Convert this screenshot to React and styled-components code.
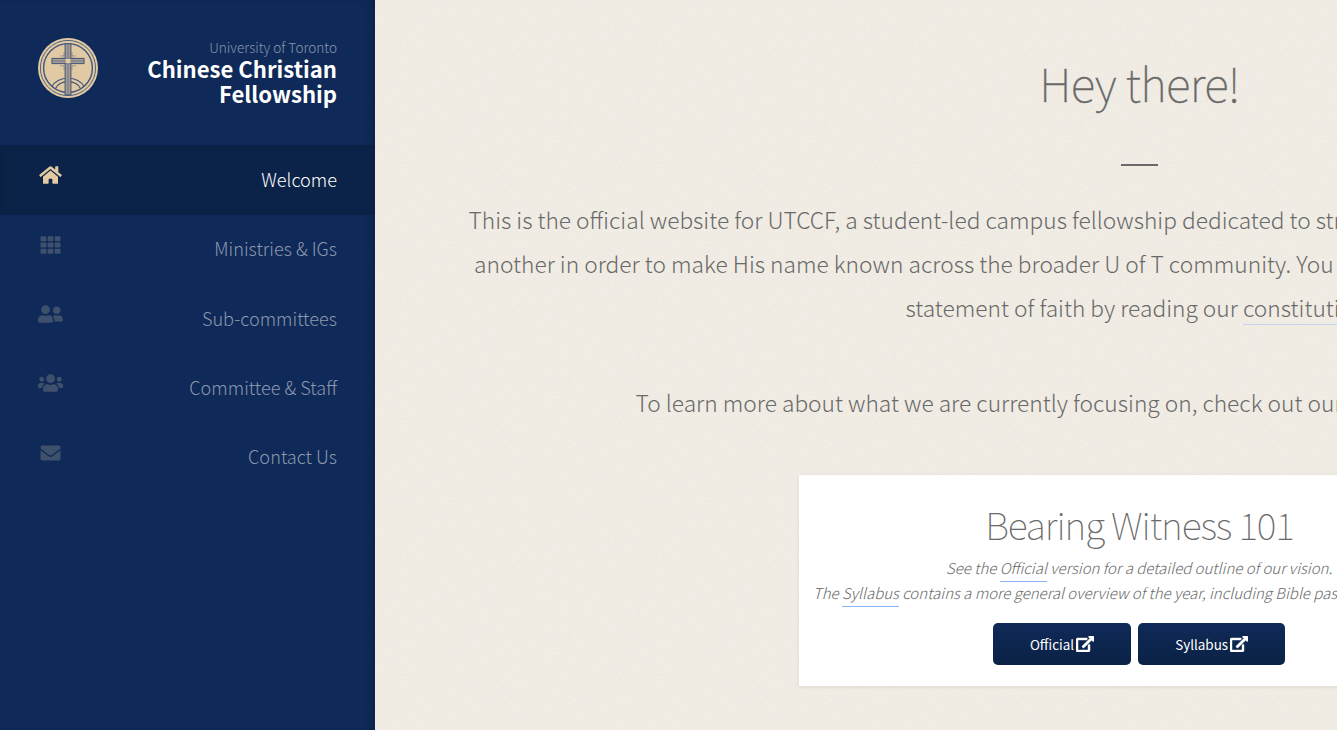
import React from 'react';
import styled, { createGlobalStyle, css } from 'styled-components';
import { FaHome, FaTh, FaUserFriends, FaUsers, FaEnvelope } from 'react-icons/fa';

const grain = `url("data:image/svg+xml,%3Csvg xmlns='http://www.w3.org/2000/svg' width='256' height='256'%3E%3Cfilter id='n'%3E%3CfeTurbulence type='fractalNoise' baseFrequency='0.55' numOctaves='3' stitchTiles='stitch'/%3E%3CfeColorMatrix values='0 0 0 0 0.45 0 0 0 0 0.43 0 0 0 0 0.38 0.17 0 0 0 -0.05'/%3E%3C/filter%3E%3Crect width='256' height='256' filter='url(%23n)'/%3E%3C/svg%3E")`;

const GlobalStyle = createGlobalStyle`
  *, *::before, *::after { box-sizing: border-box; }
  html, body { margin: 0; padding: 0; overflow: hidden; }
  body {
    font-family: "Noto Sans CJK SC", "Open Sans", sans-serif;
    font-weight: 200;
    color: #696969;
    background: #efebe3;
  }
  h1, h2, h3, p { margin: 0; }
  a { color: inherit; text-decoration: none; }
`;

const Page = styled.div`
  display: flex;
  width: 1337px;
  height: 730px;
  overflow: hidden;
`;

const Sidebar = styled.aside`
  flex: none;
  width: 375px;
  height: 100%;
  background: #0f2a58;
  box-shadow: inset -7px 0 9px -5px rgba(0, 18, 50, 0.4);
`;

const Brand = styled.header`
  display: flex;
  justify-content: space-between;
  height: 145.3px;
  padding: 38px 38px 0;
`;

const Seal = styled.svg`
  flex: none;
  width: 60px;
  height: 60px;
`;

const BrandText = styled.div`
  text-align: right;
`;

const School = styled.p`
  font-size: 13.6px;
  font-weight: 300;
  line-height: 18px;
  color: #8797ae;
`;

const Name = styled.h1`
  font-size: 22.1px;
  font-weight: 700;
  line-height: 25px;
  color: #fff;
`;

const Nav = styled.nav`
  display: flex;
  flex-direction: column;
`;

const NavItem = styled.a`
  display: flex;
  align-items: center;
  justify-content: space-between;
  height: 69.3px;
  padding: 0 38px;
  font-size: 18.15px;
  font-weight: 300;
  line-height: 28px;
  color: #8c98ae;

  svg {
    width: 25px;
    height: 20px;
    margin-bottom: 9px;
    color: #3f506c;
  }

  ${(p) =>
    p.$active &&
    css`
      color: #fff;
      background: #0b2348;
      box-shadow: inset 0 0 9px rgba(0, 20, 45, 0.16);
      svg { color: #e3caa2; }
    `}
`;

const NavLabel = styled.span`
  padding-bottom: 2px;
`;

const Main = styled.main`
  flex: none;
  display: flex;
  flex-direction: column;
  align-items: center;
  width: 1529px;
  padding-top: 47px;
  background: ${grain} #f2eee6;
`;

const Title = styled.h2`
  font-size: 46px;
  font-weight: 100;
  line-height: 70px;
  letter-spacing: -0.6px;
  -webkit-text-stroke: 0.35px currentColor;
`;

const Rule = styled.hr`
  width: 37px;
  height: 2px;
  margin: 47px 0 32px;
  border: 0;
  background: #696969;
`;

const Lead = styled.p`
  display: flex;
  flex-direction: column;
  align-items: center;
  margin-bottom: ${(p) => p.$gap}px;
  font-size: 22.74px;
  line-height: 44px;
`;

const Line = styled.span`
  display: block;
  width: ${(p) => p.$width}px;
  white-space: nowrap;
`;

const Link = styled.a`
  border-bottom: 1px solid #c3d5ec;
`;

const NoteLink = styled(Link)`
  padding-bottom: 3px;
  border-bottom-color: #8ab4f8;
`;

const Card = styled.section`
  display: flex;
  flex-direction: column;
  align-items: center;
  width: 681px;
  height: 211px;
  padding-top: 23px;
  background: #fff;
  box-shadow: 0 1px 4px rgba(80, 70, 50, 0.12);
`;

const CardTitle = styled.h3`
  font-size: 37.5px;
  font-weight: 100;
  line-height: 52px;
  letter-spacing: -1.1px;
`;

const Note = styled.p`
  display: flex;
  flex-direction: column;
  align-items: center;
  margin: 5px 0 18px;
  font-size: 15px;
  font-style: italic;
  line-height: 25px;
`;

const Actions = styled.div`
  display: flex;
  gap: 7px;
  margin-right: 1px;
`;

const Button = styled.a`
  display: flex;
  align-items: center;
  gap: 2px;
  height: 42px;
  padding: 0 37px;
  border-radius: 5px;
  background: linear-gradient(#0f2a58, #0b2246);
  font-size: 13.45px;
  font-weight: 400;
  line-height: 20px;
  color: #fff;

  svg {
    width: 18px;
    height: 16px;
    fill: currentColor;
    stroke: currentColor;
    stroke-width: 14px;
  }
`;

const ExternalIcon = () => (
  <svg viewBox="0 0 576 512">
    <path d="M576 24v127.984c0 21.461-25.96 31.98-40.971 16.971l-35.707-35.709-243.523 243.523c-9.373 9.373-24.568 9.373-33.941 0l-22.627-22.627c-9.373-9.373-9.373-24.569 0-33.941L442.756 76.676l-35.703-35.705C391.982 25.9 402.656 0 424.024 0H552c13.255 0 24 10.745 24 24zM407.029 270.794l-16 16A23.999 23.999 0 0 0 384 303.765V448H64V128h264a24.003 24.003 0 0 0 16.970-7.029l16-16C376.089 89.851 365.381 64 344 64H48C21.490 64 0 85.490 0 112v352c0 26.510 21.490 48 48 48h352c26.510 0 48-21.490 48-48V287.763c0-21.382-25.852-32.090-40.971-16.969z" />
  </svg>
);

const Logo = () => (
  <Seal viewBox="0 0 60 60" fill="none" stroke="#43557a">
    <circle cx="30" cy="30" r="30" fill="#e0c9a3" stroke="none" />
    <circle cx="30" cy="30" r="27.6" strokeWidth="0.9" />
    <circle cx="30" cy="30" r="24.4" strokeWidth="1.4" />
    <path d="M14 48.500a17 12.500 0 0 1 32 0M17.500 50.500a13 9.500 0 0 1 25 0" strokeWidth="1.1" />
    <path d="M22 18h4v-4M24 20h3M38 18h-4v-4M36 20h-3M22 27.800h4v4M38 27.800h-4v4" strokeWidth="0.7" opacity="0.6" />
    <rect x="27.100" y="5.800" width="5.800" height="51" fill="#a39c90" strokeWidth="1" />
    <rect x="14" y="20.400" width="32" height="5.200" fill="#a39c90" strokeWidth="1" />
    <path d="M30 6v51M14 23h32" stroke="#66718a" strokeWidth="0.8" />
    <rect x="27.700" y="20.600" width="4.800" height="4.800" fill="#e0c9a3" stroke="none" />
  </Seal>
);

const navItems = [
  { label: 'Welcome', Icon: FaHome, active: true },
  { label: 'Ministries & IGs', Icon: FaTh },
  { label: 'Sub-committees', Icon: FaUserFriends },
  { label: 'Committee & Staff', Icon: FaUsers },
  { label: 'Contact Us', Icon: FaEnvelope },
];

export default function App() {
  return (
    <Page>
      <GlobalStyle />
      <Sidebar>
        <Brand>
          <Logo />
          <BrandText>
            <School>University of Toronto</School>
            <Name>Chinese Christian<br />Fellowship</Name>
          </BrandText>
        </Brand>
        <Nav>
          {navItems.map(({ label, Icon, active }) => (
            <NavItem key={label} $active={active} href="#">
              <Icon />
              <NavLabel>{label}</NavLabel>
            </NavItem>
          ))}
        </Nav>
      </Sidebar>
      <Main>
        <Title>Hey there!</Title>
        <Rule />
        <Lead $gap={51}>
          <Line $width={1342}>This is the official website for UTCCF, a student-led campus fellowship dedicated to str</Line>
          <Line $width={1331}>another in order to make His name known across the broader U of T community. You</Line>
          <Line $width={468}>statement of faith by reading our <Link href="#">constitution</Link></Line>
        </Lead>
        <Lead $gap={50}>
          <Line $width={1008}>To learn more about what we are currently focusing on, check out our</Line>
        </Lead>
        <Card>
          <CardTitle>Bearing Witness 101</CardTitle>
          <Note>
            <Line $width={387}>See the <NoteLink href="#">Official</NoteLink> version for a detailed outline of our vision.</Line>
            <Line $width={653}>The <NoteLink href="#">Syllabus</NoteLink> contains a more general overview of the year, including Bible passages</Line>
          </Note>
          <Actions>
            <Button href="#">Official<ExternalIcon /></Button>
            <Button href="#">Syllabus<ExternalIcon /></Button>
          </Actions>
        </Card>
      </Main>
    </Page>
  );
}
